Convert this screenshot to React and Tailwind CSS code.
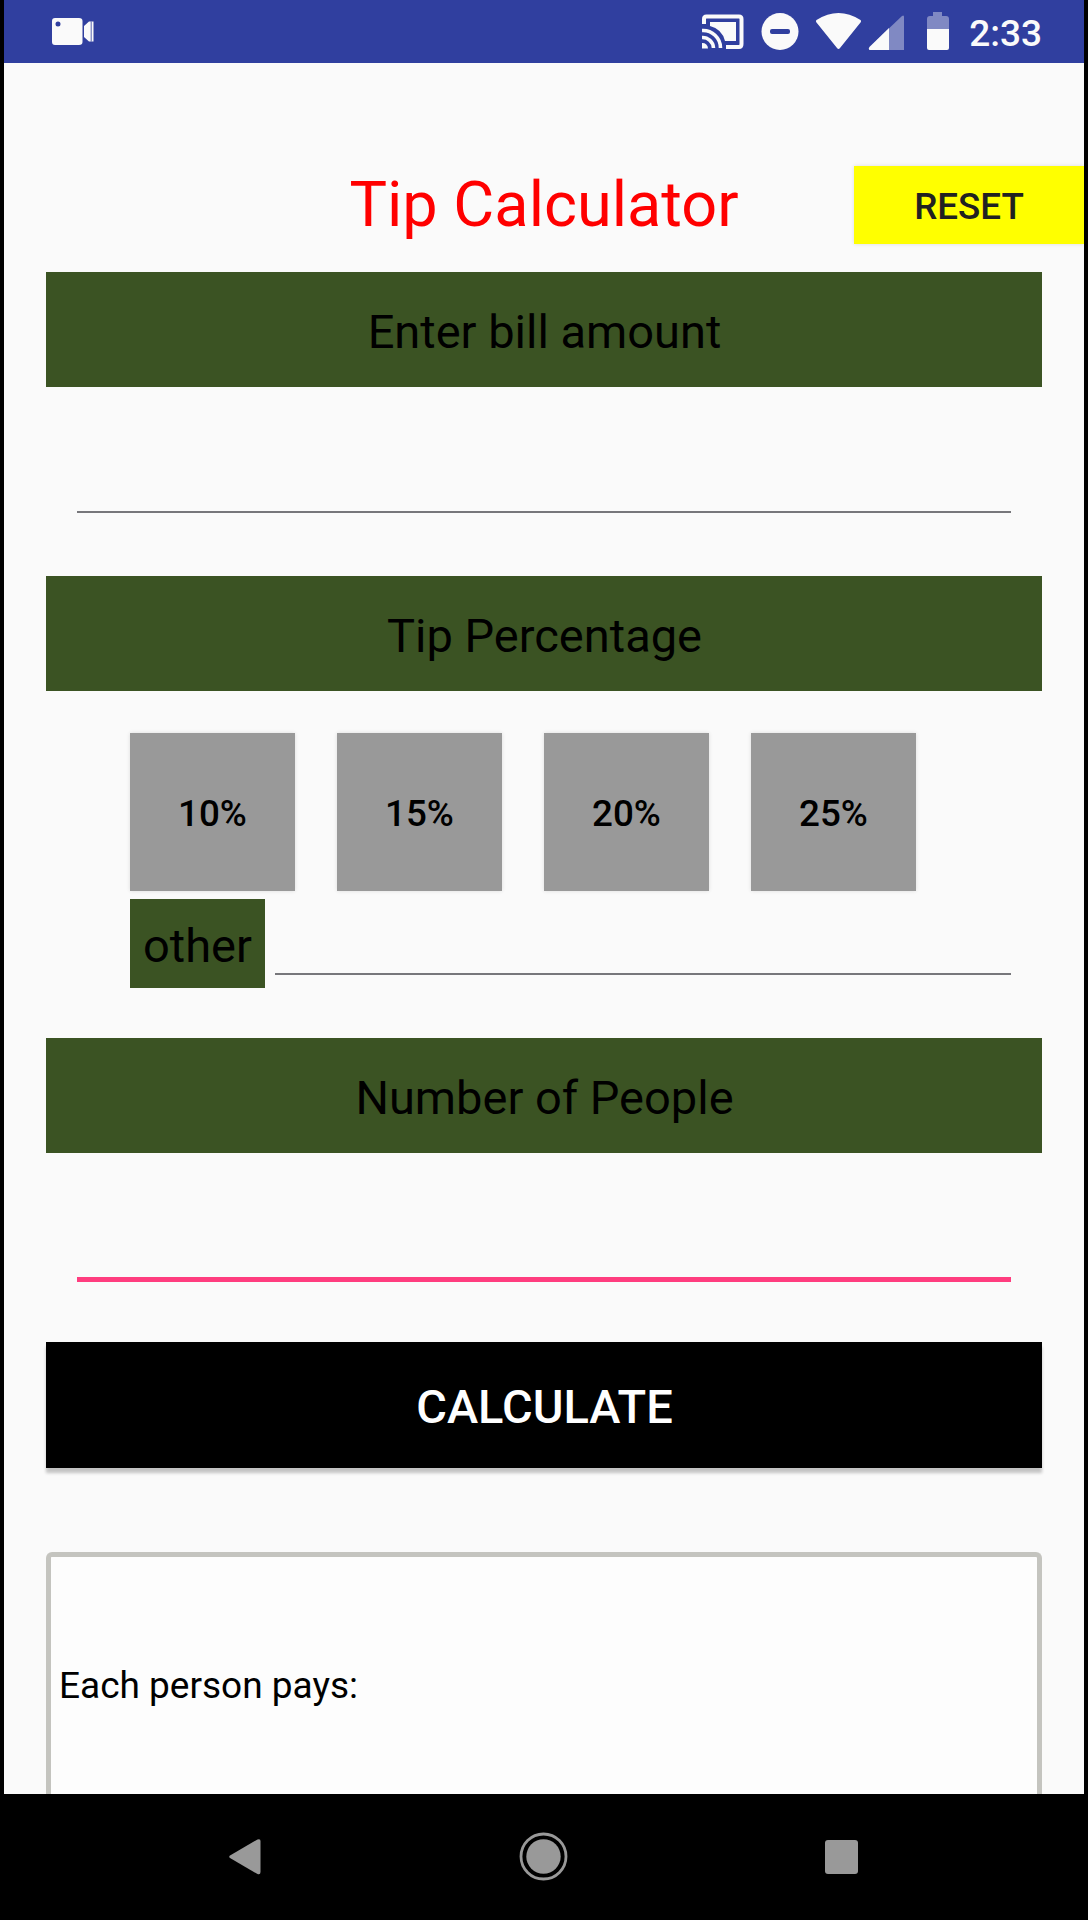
const TIPS = ["10%", "15%", "20%", "25%"];

function StatusBar() {
  return (
    <header className="flex h-[63px] shrink-0 items-start bg-[#303f9f]">
      <svg className="ml-[47px] mt-[17px] h-7 w-[44px]" viewBox="0 0 44 28" fill="#fafafa">
        <path fillRule="evenodd" d="M4 1H28Q31.500 1 31.500 4V25Q31.500 28 28 28H4Q1 28 1 25V4Q1 1 4 1ZM7 4.500A2.500 2.500 0 1 0 7 9.500A2.500 2.500 0 1 0 7 4.500Z" />
        <path d="M33 9L38 4.500H42.500V24.500H38L33 20Z" />
        <path d="M40.200 4.500V24.500" stroke="#303f9f" strokeWidth="0.800" />
      </svg>
      <div className="flex-1" />
      <svg className="mt-[14px] h-[36px] w-[42px]" viewBox="0 0 42 36" fill="none" stroke="#fafafa">
        <path d="M2 10V5Q2 2.500 4.500 2.500H37Q39.500 2.500 39.500 5V30Q39.500 33 37 33H24" strokeWidth="4" />
        <path d="M8 8H34V27H23Q20 15 8 12Z" fill="#fafafa" stroke="none" />
        <path d="M0 16.500A17.500 17.500 0 0 1 18.500 34M0 23.500A11 11 0 0 1 11.500 34" strokeWidth="3.600" />
        <path d="M0 29A5.500 5.500 0 0 1 6 34.500H0Z" fill="#fafafa" stroke="none" />
      </svg>
      <svg className="ml-[17px] mt-[12px] h-[39px] w-[39px]" viewBox="0 0 39 39">
        <circle cx="19" cy="19.500" r="18.500" fill="#fafafa" />
        <rect x="9" y="17" width="20" height="5" rx="2" fill="#303f9f" />
      </svg>
      <svg className="ml-[15px] mt-[12px] h-[39px] w-[47px]" viewBox="0 0 47 39" fill="#fafafa">
        <path d="M1.500 8Q23.500 -6 45.500 8Q46.500 9 45.500 10.500L25 36Q23.500 38 22 36L1.500 10.500Q.5 9 1.500 8Z" />
      </svg>
      <svg className="ml-[6px] mt-[12px] h-[39px] w-[38px]" viewBox="0 0 38 39">
        <path d="M1.500 38Q0 37 1.500 35L34 4Q36 2.500 36 5V38Z" fill="#fafafa" opacity="0.4" />
        <path d="M1.500 38Q0 37 1.500 35L21 16V38Z" fill="#fafafa" />
      </svg>
      <svg className="ml-[20px] mt-[12px] h-[39px] w-[24px]" viewBox="0 0 24 39" fill="#fafafa">
        <path d="M7 0H16V4H20Q23 4 23 7V17H1V7Q1 4 4 4H7Z" opacity="0.4" />
        <path d="M1 17H23V36Q23 38 21 38H3Q1 38 1 36Z" />
      </svg>
      <span className="ml-[19px] mr-[42px] mt-[12px] text-[37px] font-medium leading-[43px] text-[#fafafa]">2:33</span>
    </header>
  );
}

function SectionTitle({ children }) {
  return (
    <h2 className="mx-[42px] h-[115px] shrink-0 bg-[#3b5323] pl-px pt-[5px] text-center text-[47px] font-normal leading-[109px] text-black">
      {children}
    </h2>
  );
}

function NavBar() {
  return (
    <nav className="flex h-[126px] shrink-0 items-start bg-black">
      <svg className="ml-[225px] mt-[44px] h-[38px] w-[33px]" viewBox="0 0 33 38" fill="#999">
        <path d="M1 17.500L28.500 1.500Q31.500 .5 31.500 3V34Q31.500 37 28.500 36L1 20Q-.5 18.500 1 17.500Z" />
      </svg>
      <svg className="ml-[257px] mt-[38px] h-[49px] w-[49px]" viewBox="0 0 49 49">
        <circle cx="24.500" cy="24.500" r="22.500" fill="none" stroke="#999" strokeWidth="2.800" />
        <circle cx="24.500" cy="24.500" r="17.200" fill="#999" />
      </svg>
      <div className="ml-[257px] mt-[46px] h-[34px] w-[33px] rounded-[3px] bg-[#999]" />
    </nav>
  );
}

export default function App() {
  return (
    <div className="flex h-[1920px] w-[1088px] flex-col overflow-hidden bg-black px-1 font-['Roboto',sans-serif]">
      <StatusBar />
      <main className="flex min-h-0 flex-1 flex-col overflow-hidden bg-[#fafafa]">
        <div className="mt-[102px] grid h-[107px] shrink-0 grid-cols-[230px_1fr_230px] items-start">
          <h1 className="col-start-2 pt-1 text-center text-[63px] font-normal leading-[72px] text-[#ff0000]">Tip Calculator</h1>
          <button className="mt-px h-[78px] bg-[#ffff00] pt-[3px] text-[36.75px] font-medium leading-[75px] text-[#212121] shadow-[0_0_4px_rgba(0,0,0,0.12)]">
            RESET
          </button>
        </div>

        <SectionTitle>Enter bill amount</SectionTitle>
        <input aria-label="Bill amount" className="mx-[73px] mb-[63px] h-[126px] shrink-0 border-b-[2.6px] border-[#77777b] bg-transparent px-2 text-[47px] outline-none" />

        <SectionTitle>Tip Percentage</SectionTitle>
        <div className="ml-[126px] mt-[42px] flex shrink-0 gap-[42px]">
          {TIPS.map((tip) => (
            <button key={tip} className="h-[158px] w-[165px] bg-[#999999] pt-1 text-[36.75px] font-medium text-black shadow-[0_0_4px_rgba(0,0,0,0.12)]">
              {tip}
            </button>
          ))}
        </div>
        <div className="ml-[126px] mr-[73px] mt-2 flex h-[89px] shrink-0 gap-[10px]">
          <span className="w-[135px] bg-[#3b5323] pt-[5px] text-center text-[47px] leading-[84px] text-black">other</span>
          <input aria-label="Other tip" className="h-[76px] min-w-0 flex-1 border-b-[2.6px] border-[#77777b] bg-transparent text-[47px] outline-none" />
        </div>

        <div className="h-[50px] shrink-0" />
        <SectionTitle>Number of People</SectionTitle>
        <input aria-label="Number of people" className="mx-[73px] h-[129px] shrink-0 border-b-[5px] border-[#ff3d7f] bg-transparent px-2 text-[47px] outline-none" />

        <button className="mx-[42px] mt-[60px] h-[126px] shrink-0 bg-black pl-px pt-1 text-[47px] font-medium leading-[122px] text-white shadow-[0_5px_3px_rgba(0,0,0,0.22)]">
          CALCULATE
        </button>

        <section className="mx-[42px] mt-[84px] min-h-0 flex-1 rounded-t-[6px] border-x-[5px] border-t-[5px] border-[#c4c4bf] bg-[#fdfdfd] px-2 pt-[107px] text-[37px] leading-[43px] text-black">
          Each person pays:
        </section>
      </main>
      <NavBar />
    </div>
  );
}
